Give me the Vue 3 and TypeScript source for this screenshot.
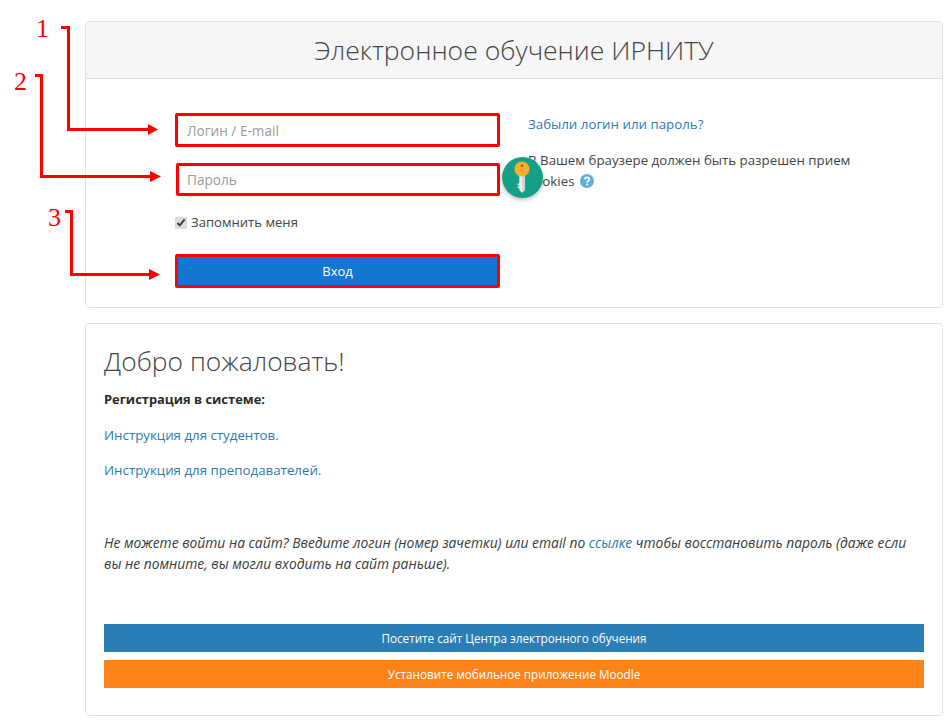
<script setup lang="ts">
const marks = [
  { n: '1', cls: 'n1', d: 'M61 27.5H68.5V129.5H149' , a: '148,124 158,129.5 148,135' },
  { n: '2', cls: 'n2', d: 'M35 75.5H41.5V176.5H151', a: '150,171 161,176.5 150,182' },
  { n: '3', cls: 'n3', d: 'M65 211.5H71.5V274.5H150', a: '149,269 160,274.5 149,280' },
]
</script>

<template>
  <div class="page">
    <section class="card login">
      <h1 class="title">Электронное обучение ИРНИТУ</h1>
      <div class="login-body">
        <form class="form" @submit.prevent>
          <input class="field" type="text" placeholder="Логин / E-mail" />
          <input class="field second" type="password" placeholder="Пароль" />
          <label class="remember"><input type="checkbox" checked /> Запомнить меня</label>
          <button class="submit" type="submit">Вход</button>
        </form>
        <div class="help">
          <a class="link" href="#">Забыли логин или пароль?</a>
          <p class="cookies">
            В Вашем браузере должен быть разрешен прием cookies
            <svg class="qmark" viewBox="0 0 14 14" width="14" height="14">
              <circle cx="7" cy="7" r="7" fill="#5fb0d3" />
              <path d="M4.8 5.4C4.9 4.1 5.8 3.4 7 3.4c1.300 0 2.200.8 2.200 1.900 0 1.700-2.100 1.600-2.100 3.100" fill="none" stroke="#fff" stroke-width="1.700" />
              <circle cx="7.100" cy="10.500" r="1.050" fill="#fff" />
            </svg>
          </p>
        </div>
      </div>
    </section>

    <section class="card welcome">
      <h2 class="hello">Добро пожаловать!</h2>
      <p class="reg"><strong>Регистрация в системе:</strong></p>
      <p class="line"><a class="link" href="#">Инструкция для студентов.</a></p>
      <p class="line tight"><a class="link" href="#">Инструкция для преподавателей.</a></p>
      <p class="note">Не можете войти на сайт? Введите логин (номер зачетки) или email по <a class="link" href="#">ссылке</a> чтобы восстановить пароль (даже если вы не помните, вы могли входить на сайт раньше).</p>
      <a class="band blue" href="#">Посетите сайт Центра электронного обучения</a>
      <a class="band orange" href="#">Установите мобильное приложение Moodle</a>
    </section>

    <svg class="arrows" width="170" height="290" viewBox="0 0 170 290">
      <g v-for="m in marks" :key="m.n">
        <path :d="m.d" fill="none" stroke="#fe0000" stroke-width="3" />
        <polygon :points="m.a" fill="#fe0000" />
      </g>
    </svg>
    <span v-for="m in marks" :key="m.n" class="num" :class="m.cls">{{ m.n }}</span>

    <div class="badge">
      <svg viewBox="0 0 41 41" width="41" height="41">
        <circle cx="20.500" cy="20.500" r="20.500" fill="#15a085" />
        <path d="M17.300 17h5.400v16l-2.700 2.700-2.700-2.700v-2h-1.700v-1.600h1.700v-1.200h-1.700v-1.600h1.700z" fill="#f1f4f5" />
        <path d="M20 18h2.700v15L20 35.700z" fill="#cfd8dc" />
        <circle cx="20" cy="12" r="7.600" fill="#f9ae2b" />
        <circle cx="20" cy="8.800" r="1.300" fill="#7a6428" />
      </svg>
    </div>
  </div>
</template>

<style>
html, body { margin: 0; background: #fff; }
</style>

<style scoped>
.page {
  position: relative;
  box-sizing: border-box;
  width: 948px;
  height: 725px;
  padding: 21px 5px 0 85px;
  font-family: "Open Sans", "Liberation Sans", sans-serif;
  font-size: 13.300px;
  line-height: 21px;
  color: #373a3c;
  overflow: hidden;
}
.card {
  box-sizing: border-box;
  border: 1px solid #e3e3e3;
  border-radius: 4px;
  background: #fff;
}
.login { height: 287px; }
.title {
  margin: 0;
  height: 57px;
  box-sizing: border-box;
  border-bottom: 1px solid #dcdcdc;
  background: #f6f6f6;
  border-radius: 3px 3px 0 0;
  font-size: 26.550px;
  font-weight: 300;
  line-height: 56px;
  text-align: center;
  color: #444;
}
.login-body {
  display: grid;
  grid-template-columns: 325px 380px;
  column-gap: 28px;
  padding: 34px 0 0 89px;
}
.form { display: flex; flex-direction: column; align-items: flex-start; }
.field {
  box-sizing: border-box;
  width: 325px;
  height: 34px;
  padding: 0 9px;
  border: 3px solid #fe0000;
  border-radius: 2px;
  font: inherit;
  font-size: 13.600px;
  color: #555;
  outline: none;
}
.field::placeholder { color: #9b9b9b; opacity: 1; }
.second { margin: 16px 0 0 1px; width: 324px; height: 33px; padding: 0 8px; }
.remember {
  display: flex;
  align-items: center;
  gap: 4px;
  margin-top: 16px;
  height: 21px;
  font-size: 13.100px;
  color: #444;
}
.remember input { margin: 0; width: 12px; height: 12px; accent-color: #dcdcdc; }
.submit {
  box-sizing: border-box;
  width: 325px;
  height: 34px;
  margin-top: 21px;
  border: 3px solid #fe0000;
  border-radius: 2px;
  background: #1177d1;
  color: #fff;
  font: inherit;
  font-size: 13px;
  padding: 0;
}
.help { padding-top: 1px; }
.link { color: #2b7cb0; text-decoration: none; }
.help > .link { display: block; }
.cookies { margin: 15px 0 0; width: 340px; color: #444; }
.qmark { vertical-align: -2px; margin-left: 2px; }
.welcome { height: 393px; margin-top: 15px; padding: 18px 18px 0; }
.hello {
  margin: 0;
  font-size: 26.400px;
  font-weight: 300;
  line-height: 38px;
  color: #444;
}
.reg { margin: 9px 0 0; font-size: 12.900px; color: #2b2b2b; }
.line { margin: 15px 0 0; }
.tight { margin-top: 14px; }
.note { margin: 51px 0 0; font-size: 13.830px; font-style: italic; line-height: 21px; color: #3a3a3a; }
.band {
  display: block;
  height: 28px;
  line-height: 28px;
  text-align: center;
  font-size: 11.700px;
  color: #fff;
  text-decoration: none;
}
.blue { margin-top: 50px; background: #2a7db5; }
.orange { margin-top: 8px; background: #fd8318; }
.arrows { position: absolute; left: 0; top: 0; pointer-events: none; }
.num {
  position: absolute;
  font-family: "Liberation Serif", serif;
  font-size: 26px;
  line-height: 26px;
  color: #fe0000;
}
.n1 { left: 36px; top: 16px; }
.n2 { left: 14px; top: 69px; }
.n3 { left: 48px; top: 205px; }
.badge {
  position: absolute;
  left: 502px;
  top: 157px;
  width: 41px;
  height: 41px;
  border-radius: 50%;
  box-shadow: 0 2px 4px rgba(0, 0, 0, 0.25);
}
.badge svg { display: block; }
</style>
